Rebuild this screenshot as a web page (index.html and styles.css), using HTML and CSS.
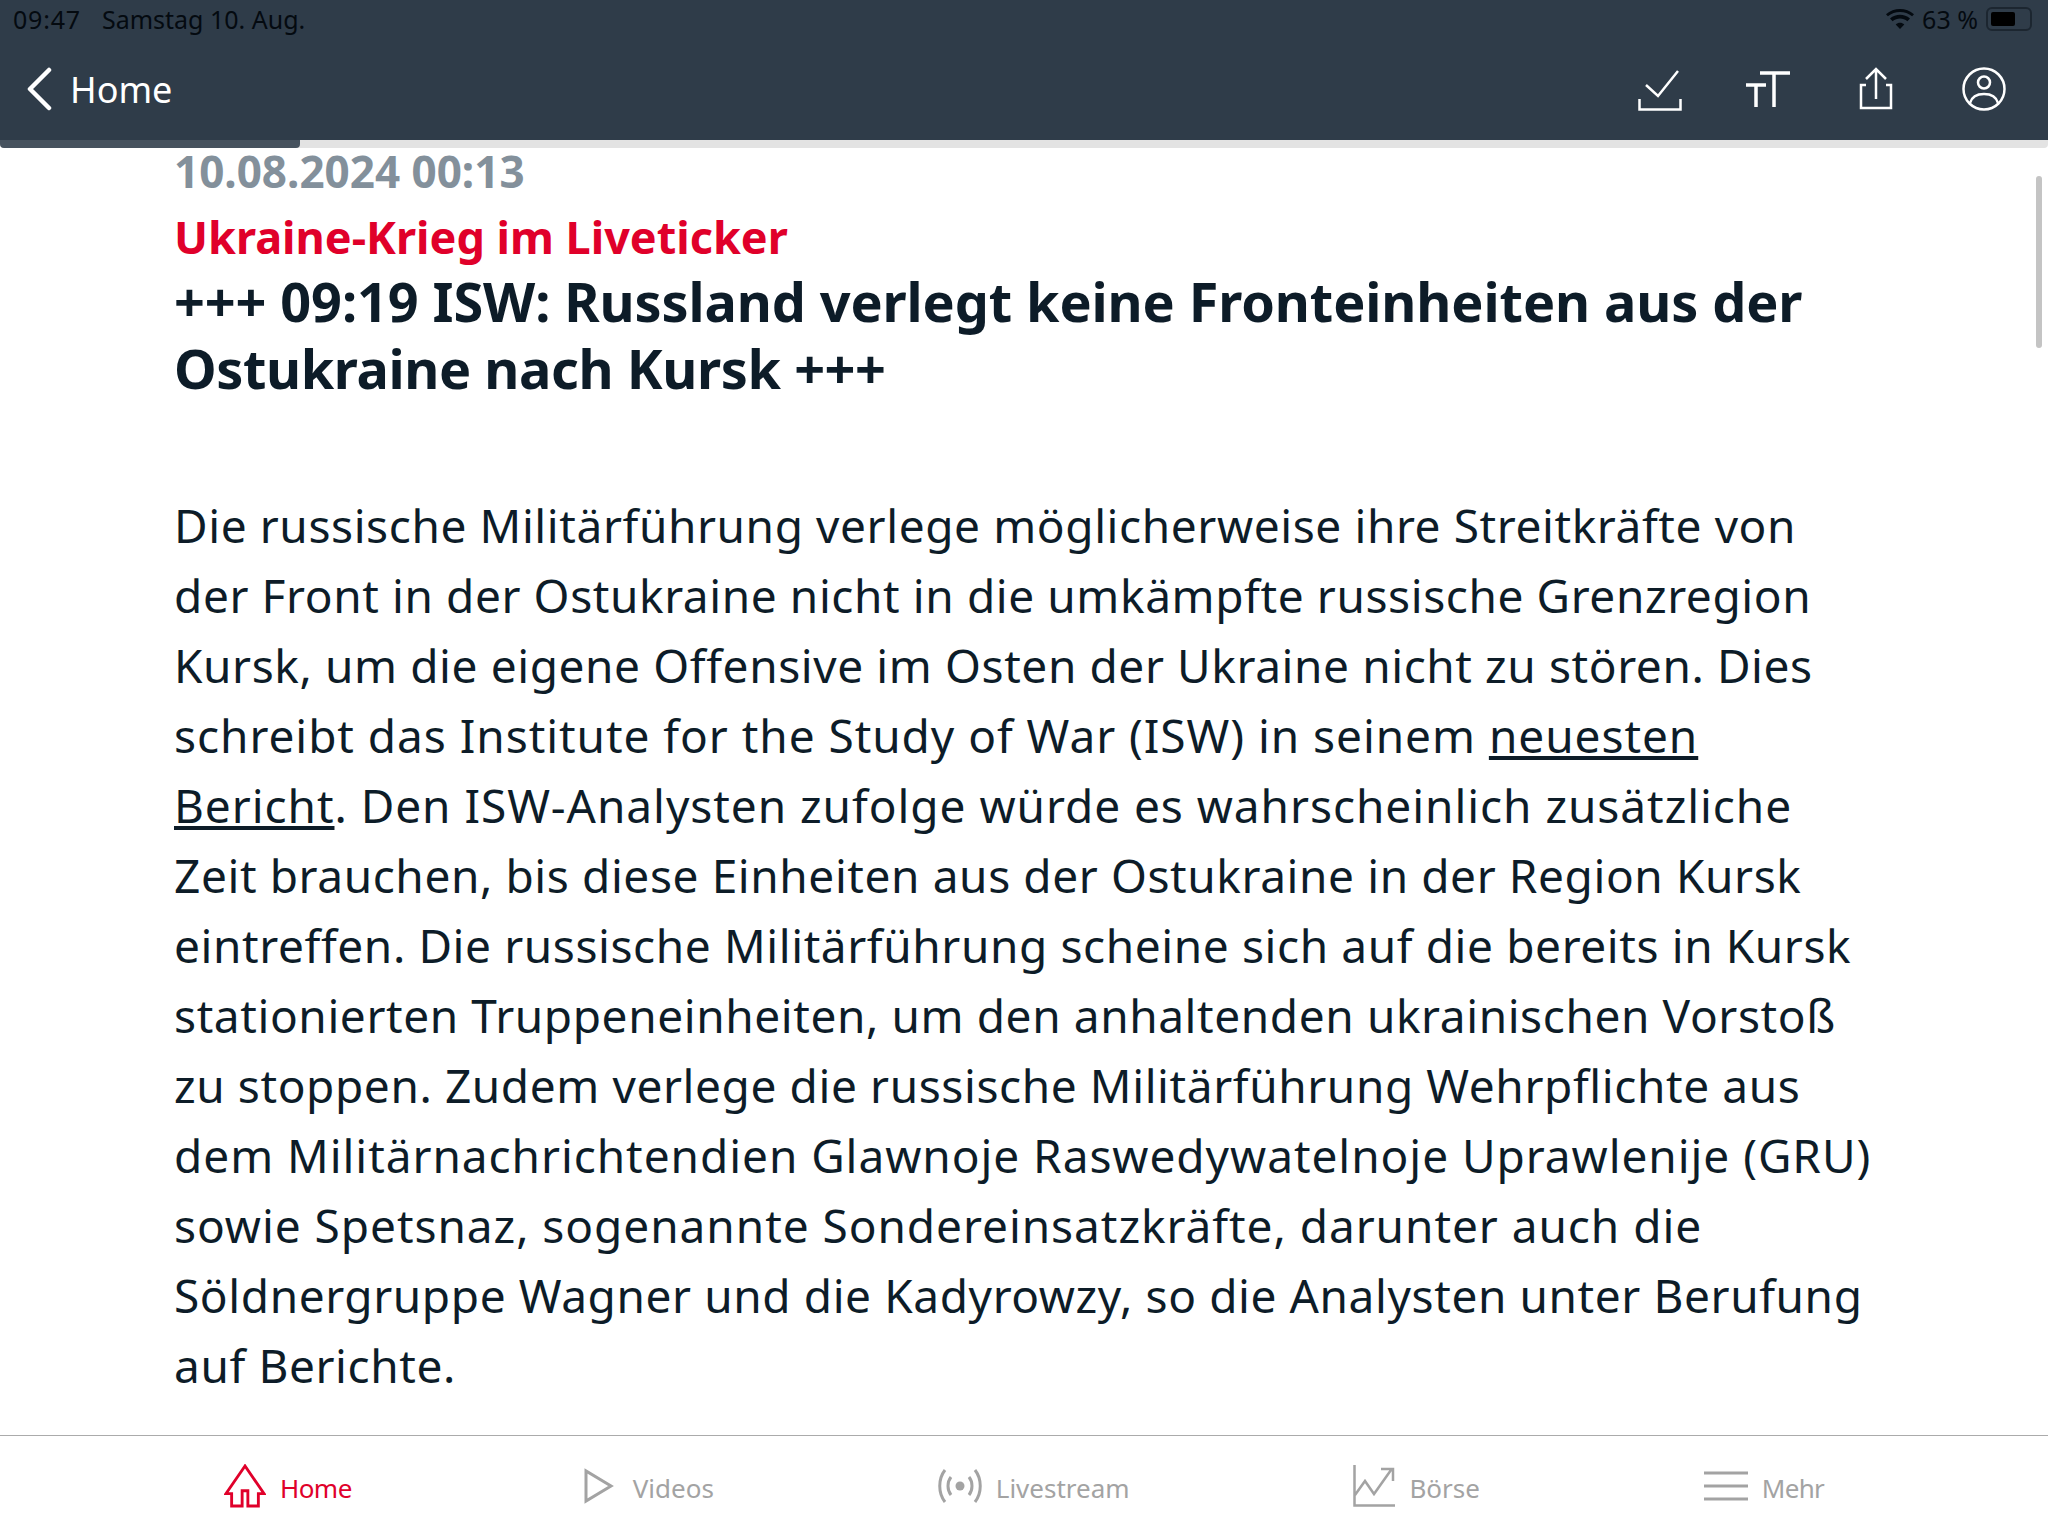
FILE: index.html
```html
<!DOCTYPE html>
<html lang="de">

<head>
    <meta charset="UTF-8">
    <meta name="viewport" content="width=device-width, initial-scale=1.0">
    <title>Ukraine-Krieg im Liveticker</title>

    <link rel="stylesheet" href="styles.css">
</head>

<body>
    <header class="kopf">
        <div class="statusBar">
            <div class="statusLinks">
                <span class="uhrzeit">09:47</span>
                <span>Samstag 10. Aug.</span>
            </div>
            <div class="statusRechts">
                <svg class="wifi" viewBox="0 0 28 20" width="28" height="20">
                    <path d="M14 20l-4.300-4.600c2.500-2.100 6.100-2.100 8.600 0zM6.600 12.200L4 9.500c5.700-5 14.300-5 20 0l-2.600 2.700c-4.300-3.600-10.500-3.600-14.800 0zM1.900 7.300L0 5.200C7.800-1.700 20.200-1.700 28 5.200l-1.900 2.100C19.400 1.500 8.600 1.500 1.900 7.300z" />
                </svg>
                <span>63 %</span>
                <div class="batterie">
                    <div class="batterieStand"></div>
                </div>
            </div>
        </div>

        <div class="navBar">
            <a class="zurueck">
                <svg viewBox="0 0 26 44" width="26" height="44">
                    <path d="M23 3L4 22l19 19" fill="none" stroke="#fff" stroke-width="4.500" stroke-linecap="round" stroke-linejoin="round" />
                </svg>
                <span>Home</span>
            </a>
            <div class="aktionen">
                <svg viewBox="0 0 44 44" width="44" height="44">
                    <path d="M8 18l12 11L40 4M1.500 32v10.500h41V32" fill="none" stroke="#fff" stroke-width="2.500" />
                </svg>
                <svg viewBox="0 0 44 44" width="44" height="44">
                    <path d="M0 18h20M10 18v22M14 6h30M28 6v34" fill="none" stroke="#fff" stroke-width="3.500" />
                </svg>
                <svg viewBox="0 0 44 44" width="44" height="44">
                    <path d="M12 18H7v23h30V18h-5M22 32V3M12 12L22 2l10 10" fill="none" stroke="#fff" stroke-width="2.500" />
                </svg>
                <svg viewBox="0 0 44 44" width="44" height="44">
                    <circle cx="22" cy="22" r="20.500" fill="none" stroke="#fff" stroke-width="2.500" />
                    <circle cx="22" cy="15.500" r="6" fill="none" stroke="#fff" stroke-width="2.500" />
                    <path d="M8 36c2-7 8-9 14-9s12 2 14 9" fill="none" stroke="#fff" stroke-width="2.500" />
                </svg>
            </div>
        </div>
    </header>

    <div class="fortschritt">
        <div class="fortschrittBalken"></div>
    </div>

    <main class="artikel">
        <div class="scrollBalken"></div>
        <div class="datum">10.08.2024 00:13</div>
        <h2 class="dachzeile">Ukraine-Krieg im Liveticker</h2>
        <h1 class="titel">+++ 09:19 ISW: Russland verlegt keine Fronteinheiten aus der<br>
            <span class="titelEng">Ostukraine nach Kursk +++</span></h1>
        <p class="text">
            Die russische Militärführung verlege möglicherweise ihre Streitkräfte von<br>
            der Front in der Ostukraine nicht in die umkämpfte russische Grenzregion<br>
            Kursk, um die eigene Offensive im Osten der Ukraine nicht zu stören. Dies<br>
            <span class="breit">schreibt das Institute for the Study of War (ISW) in seinem <u>neuesten<br>
            Bericht</u>. Den ISW-Analysten zufolge würde es wahrscheinlich zusätzliche</span><br>
            Zeit brauchen, bis diese Einheiten aus der Ostukraine in der Region Kursk<br>
            eintreffen. Die russische Militärführung scheine sich auf die bereits in Kursk<br>
            stationierten Truppeneinheiten, um den anhaltenden ukrainischen Vorstoß<br>
            zu stoppen. Zudem verlege die russische Militärführung Wehrpflichte aus<br>
            <span class="breit">dem Militärnachrichtendien Glawnoje Raswedywatelnoje Uprawlenije (GRU)<br>
            sowie Spetsnaz, sogenannte Sondereinsatzkräfte, darunter auch die</span><br>
            Söldnergruppe Wagner und die Kadyrowzy, so die Analysten unter Berufung<br>
            auf Berichte.
        </p>
    </main>

    <nav class="tabBar">
        <a class="tab aktiv">
            <svg viewBox="0 0 44 46" width="42" height="44">
                <path d="M22 2L2 31h6v13h11V28h6v16h11V31h6z" fill="none" stroke="#e0002a" stroke-width="3" />
            </svg>
            <span>Home</span>
        </a>
        <a class="tab">
            <svg class="videoIcon" viewBox="0 0 30 36" width="30" height="36">
                <path d="M2 3v30l25-15z" fill="none" stroke="#a3a3a3" stroke-width="3" />
            </svg>
            <span>Videos</span>
        </a>
        <a class="tab">
            <svg viewBox="0 0 44 36" width="44" height="36">
                <circle cx="22" cy="18" r="4.500" fill="#a3a3a3" />
                <path d="M13 9c-4 5-4 13 0 18M31 9c4 5 4 13 0 18M7 2C0 11 0 25 7 34M37 2c7 9 7 23 0 32" fill="none" stroke="#a3a3a3" stroke-width="3" />
            </svg>
            <span>Livestream</span>
        </a>
        <a class="tab">
            <svg viewBox="0 0 42 42" width="42" height="42">
                <path d="M1.500 0v40.500H42M2 30l10-14 9 13L38 5M28 4h12v12" fill="none" stroke="#a3a3a3" stroke-width="2.500" />
            </svg>
            <span>Börse</span>
        </a>
        <a class="tab">
            <svg viewBox="0 0 44 32" width="44" height="32">
                <path d="M0 3h44M0 16h44M0 29h44" fill="none" stroke="#a3a3a3" stroke-width="3" />
            </svg>
            <span class="mehr">Mehr</span>
        </a>
    </nav>
</body>

</html>
```

FILE: styles.css
```css
body {
    font-family: "Noto Sans", Arial, sans-serif;
    color: #0d1c28;
    background-color: #fff;
    height: 100vh;
    margin: 0px;
    display: flex;
    flex-direction: column;
}

.kopf {
    background-color: #2f3c49;
    height: 140px;
}

.statusBar {
    height: 40px;
    padding: 0px 16px 2px 13px;
    box-sizing: border-box;
    display: flex;
    justify-content: space-between;
    align-items: center;
    font-size: 25px;
    color: #040a10;
}

.statusLinks {
    display: flex;
    gap: 21px;
}

.uhrzeit {
    letter-spacing: 0.8px;
}

.statusRechts {
    display: flex;
    align-items: center;
    gap: 8px;
}

.wifi {
    fill: #040a10;
}

.batterie {
    width: 46px;
    height: 24px;
    box-sizing: border-box;
    border: 2px solid #1c2630;
    border-radius: 6px;
    padding: 3px;
}

.batterieStand {
    width: 24px;
    height: 14px;
    background-color: #000;
    border-radius: 2px;
}

.navBar {
    height: 100px;
    padding: 0px 42px 2px 26px;
    box-sizing: border-box;
    display: flex;
    justify-content: space-between;
    align-items: center;
}

.zurueck {
    display: flex;
    align-items: center;
    gap: 18px;
    color: #fff;
    font-size: 36px;
}

.aktionen {
    display: flex;
    gap: 64px;
}

.fortschritt {
    height: 8px;
    background-color: #e3e3e3;
    border-radius: 0px 0px 4px 4px;
}

.fortschrittBalken {
    width: 300px;
    height: 8px;
    background-color: #46525e;
    border-radius: 0px 0px 4px 4px;
}

.artikel {
    flex: 1;
    position: relative;
    padding-left: 174px;
}

.scrollBalken {
    position: absolute;
    top: 28px;
    right: 6px;
    width: 6px;
    height: 172px;
    background-color: #c4c4c4;
    border-radius: 3px;
}

.datum {
    font-size: 44px;
    font-weight: 700;
    line-height: 46px;
    color: #83909b;
}

.dachzeile {
    font-size: 45px;
    font-weight: 700;
    line-height: 60px;
    margin: 13px 0px 0px;
    color: #e0002a;
}

.titel {
    font-size: 54px;
    font-weight: 700;
    line-height: 67px;
    letter-spacing: -0.1px;
    margin: 1px 0px 0px;
}

.titelEng {
    letter-spacing: -0.4px;
}

.text {
    font-size: 46px;
    line-height: 70px;
    letter-spacing: 0.6px;
    margin: 88px 0px 0px;
}

.breit {
    letter-spacing: 0.95px;
}

.tabBar {
    height: 101px;
    border-top: 1px solid #ababab;
    box-sizing: border-box;
    display: flex;
    justify-content: space-evenly;
    align-items: center;
    color: #a3a3a3;
    font-size: 26px;
}

.tab {
    display: flex;
    align-items: center;
    gap: 14px;
}

.tab span {
    margin-top: 3px;
}

.videoIcon {
    margin-right: 5px;
}

.aktiv {
    color: #e0002a;
    letter-spacing: -0.5px;
    padding-right: 8px;
}

.mehr {
    letter-spacing: -0.7px;
}
```
